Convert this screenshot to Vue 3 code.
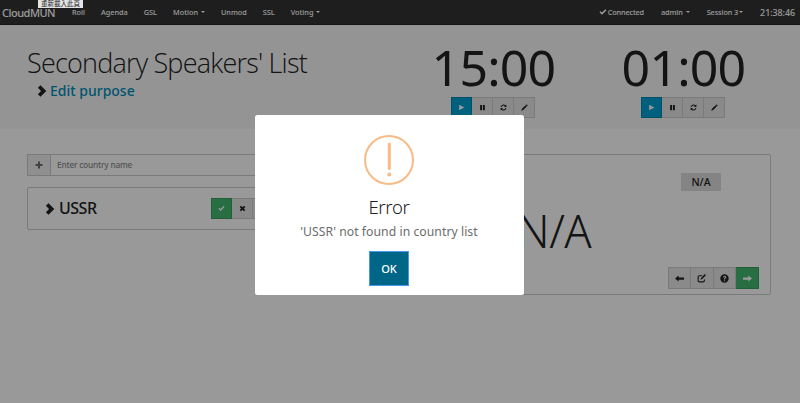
<script setup>
import { h } from 'vue'

const paths = {
  check: 'M1 8.700 3.200 6.300 6 9 12.600 2.300 15 4.700 6 13.700Z',
  times: 'M4.500 1.500 8 5 11.500 1.500 14.500 4.500 11 8 14.500 11.500 11.500 14.500 8 11 4.500 14.500 1.500 11.500 5 8 1.500 4.500Z',
  plus: 'M6 1h4v5h5v4h-5v5H6v-5H1V6h5Z',
  chevron: 'M2.500 3.800 6 .300 13.700 8 6 15.700 2.500 12.200 6.700 8Z',
  play: 'M2.500 1.500 14.500 8 2.500 14.500Z',
  pause: 'M2.500 2h4.500v12H2.500ZM9 2h4.500v12H9Z',
  refresh: 'M1.300 7A6.800 6.800 0 0 1 12.800 3.100L14.600 1.300V6.700H9.200L11.200 4.700A4.600 4.600 0 0 0 3.700 7ZM14.700 9A6.800 6.800 0 0 1 3.200 12.900L1.400 14.700V9.300H6.800L4.800 11.300A4.600 4.600 0 0 0 12.300 9Z',
  pencil: 'M12.600 .500 15.500 3.400 14 4.900 11.100 2ZM10.300 2.800 13.200 5.700 5 13.900 .500 15.500 2.100 11Z',
  left: 'M0 8 6.500 2.500V6H16V10H6.500V13.500Z',
  right: 'M16 8 9.500 2.500V6H0V10H9.500V13.500Z',
  edit: 'M10 2H4Q1 2 1 5V12Q1 15 4 15H11Q14 15 14 12V9L12 10.500V12Q12 13 11 13H4Q3 13 3 12V5Q3 4 4 4H8.500ZM14 0 16 2 9.200 9 6 10.200 7.200 7Z',
  question: 'M8 .500A7.500 7.500 0 1 0 8 15.500A7.500 7.500 0 1 0 8 .500ZM7 11H9.200V13H7ZM5 5.800Q5.300 3 8.100 3Q11.200 3 11.200 5.700Q11.200 7.400 9.200 8.300V9.800H7V7.500Q9 6.700 9 5.700Q9 4.900 8.100 4.900Q7.300 4.900 7.200 6Z',
}
const Icon = (props) =>
  h('svg', { viewBox: '0 0 16 16', class: 'icon' }, [
    h('path', { d: paths[props.name], fill: 'currentColor', 'fill-rule': 'evenodd' }),
  ])
Icon.props = ['name']

const links = [
  { label: 'Roll' },
  { label: 'Agenda' },
  { label: 'GSL' },
  { label: 'Motion', menu: true },
  { label: 'Unmod' },
  { label: 'SSL' },
  { label: 'Voting', menu: true },
]
const timers = ['15:00', '01:00']
const timerActions = ['play', 'pause', 'refresh', 'pencil']
const speakerActions = ['left', 'edit', 'question', 'right']
</script>

<template>
  <div class="page">
    <nav class="navbar">
      <span class="brand">CloudMUN</span>
      <div class="links">
        <span v-for="l in links" :key="l.label" class="link">{{ l.label }}<i v-if="l.menu" class="caret" /></span>
      </div>
      <div class="status">
        <span class="link connected"><Icon name="check" />Connected</span>
        <span class="link">admin<i class="caret" /></span>
        <span class="link">Session 3<i class="caret tight" /></span>
        <span class="clock">21:38:46</span>
      </div>
    </nav>

    <header class="header">
      <div class="heading">
        <h1>Secondary Speakers' List</h1>
        <div class="purpose"><Icon name="chevron" /><a>Edit purpose</a></div>
      </div>
      <div v-for="t in timers" :key="t" class="timer">
        <div class="time">{{ t }}</div>
        <div class="group">
          <span v-for="a in timerActions" :key="a" class="btn" :class="{ primary: a === 'play' }"><Icon :name="a" /></span>
        </div>
      </div>
    </header>

    <main class="content">
      <section class="queue">
        <div class="input">
          <span class="addon"><Icon name="plus" /></span>
          <span class="placeholder">Enter country name</span>
        </div>
        <div class="country">
          <Icon name="chevron" />
          <span class="name">USSR</span>
          <div class="group">
            <span class="btn success"><Icon name="check" /></span>
            <span class="btn"><Icon name="times" /></span>
            <span class="btn"><Icon name="left" /></span>
          </div>
        </div>
      </section>
      <section class="speaker">
        <div class="badge">N/A</div>
        <div class="current">N/A</div>
        <div class="group">
          <span v-for="a in speakerActions" :key="a" class="btn" :class="{ success: a === 'right' }"><Icon :name="a" /></span>
        </div>
      </section>
    </main>

    <div class="overlay">
      <div class="modal">
        <svg class="warning" viewBox="0 0 50 50">
          <circle cx="25" cy="25" r="24" />
          <path d="M25.300 9V33.500" />
          <circle class="dot" cx="25.300" cy="39.500" r="2" />
        </svg>
        <h2>Error</h2>
        <p>'USSR' not found in country list</p>
        <button>OK</button>
      </div>
    </div>
    <div class="hint">重新載入此頁</div>
  </div>
</template>

<style>
body { margin: 0; background: #fff; }
</style>

<style scoped>
* { box-sizing: border-box; }
.page {
  position: relative;
  height: 403px;
  overflow: hidden;
  background: #fff;
  color: #222;
  font-family: "Noto Sans", "Open Sans", sans-serif;
  white-space: nowrap;
}
.icon { display: block; flex: none; width: 8px; height: 8px; }
.navbar {
  display: flex;
  align-items: center;
  height: 25px;
  padding: 0 5px 0 2px;
  background: #333;
  border-bottom: 1px solid #222;
  color: #fff;
  font-size: 7.300px;
  font-weight: 500;
}
.brand { width: 70px; font-size: 11px; font-weight: 500; letter-spacing: -0.500px; }
.links { display: flex; gap: 16px; }
.link { display: flex; align-items: center; }
.caret {
  margin-left: 3px;
  border: 2px solid transparent;
  border-top-color: currentColor;
  border-bottom: 0;
}
.caret.tight { margin-left: 1px; }
.status { display: flex; align-items: center; margin-left: auto; }
.status .link { margin-right: 17px; letter-spacing: -0.100px; }
.status .connected { letter-spacing: -0.150px; }
.status .icon { width: 8px; height: 8px; margin-right: 1px; }
.clock { padding-top: 1px; font-size: 8.900px; letter-spacing: -0.050px; }
.header {
  display: flex;
  height: 104px;
  background: #f7f7f7;
}
.heading { width: 398.500px; padding: 20px 0 0 27px; }
h1 {
  margin: 0;
  font: 300 27px/36px "Open Sans", sans-serif;
  letter-spacing: -0.800px;
}
.purpose {
  display: flex;
  align-items: center;
  gap: 2px;
  padding-left: 9px;
  font-size: 14px;
  font-weight: 500;
  line-height: 18px;
}
.purpose .icon { width: 12px; height: 12px; }
.purpose a { padding-top: 1px; color: #008cba; }
.timer {
  display: flex;
  flex-direction: column;
  align-items: center;
  width: 190px;
  padding-top: 13px;
}
.time {
  padding-right: 0;
  font-size: 50px;
  line-height: 59px;
  letter-spacing: -0.800px;
}
.group { display: flex; }
.btn {
  display: flex;
  align-items: center;
  justify-content: center;
  width: 21px;
  height: 21px;
  background: #e7e7e7;
  border: 1px solid #ccc;
  border-left-width: 0;
}
.btn:first-child { border-left-width: 1px; }
.btn .icon { width: 7px; height: 7px; }
.timer .group { margin-right: 1px; }
.btn.primary { background: #00a0d0; border-color: #0085ad; color: #fff; }
.btn.success { background: #43b870; border-color: #3a9d5d; color: #fff; }
.content { display: flex; gap: 11px; padding: 25px 29px 0 27px; }
.queue { width: 302px; }
.input {
  display: flex;
  height: 22px;
  border: 1px solid #ccc;
  font-size: 8.300px;
}
.addon {
  display: flex;
  align-items: center;
  justify-content: center;
  width: 23px;
  background: #eee;
  border-right: 1px solid #ccc;
  color: #6f6f6f;
}
.placeholder { padding: 0 0 0 6px; color: #8c8c8c; font-weight: 500; line-height: 20px; letter-spacing: -0.200px; }
.country {
  display: flex;
  align-items: center;
  height: 43px;
  margin-top: 11px;
  padding: 0 0 0 16px;
  border: 1px solid #ccc;
  border-radius: 2px;
}
.country > .icon { width: 12px; height: 14px; margin-right: 3px; }
.name { width: 152px; padding-bottom: 1px; font-size: 16px; font-weight: 500; line-height: 22px; letter-spacing: -0.500px; }
.speaker {
  display: flex;
  flex: 1;
  flex-direction: column;
  align-items: flex-end;
  height: 141px;
  padding: 18px 11px 0 0;
  border: 1px solid #ccc;
  border-radius: 2px;
}
.badge {
  width: 40px;
  height: 18px;
  margin-right: 38px;
  background: #dcdcdc;
  font-size: 10.500px;
  font-weight: 500;
  line-height: 18px;
  text-align: center;
}
.current {
  width: 100%;
  height: 76px;
  padding-left: 8px;
  font-size: 45px;
  font-weight: 300;
  letter-spacing: -0.500px;
  line-height: 80px;
  text-align: center;
}
.speaker .btn { width: 22.750px; height: 22px; }
.speaker .btn .icon { width: 9px; height: 9px; }
.overlay {
  position: absolute;
  inset: 0;
  display: flex;
  align-items: flex-start;
  padding: 115px 0 0 254.500px;
  background: rgba(0, 0, 0, 0.4);
}
.modal {
  display: flex;
  flex-direction: column;
  align-items: center;
  width: 269px;
  height: 180px;
  padding-top: 20px;
  background: #fff;
  border-radius: 2.500px;
}
.warning { width: 50px; height: 50px; fill: none; stroke: #f8bb86; stroke-width: 2; }
.warning path { stroke-width: 3; stroke-linecap: round; }
.warning .dot { fill: #f8bb86; stroke: none; }
h2 { margin: 10px 0 0; font-size: 18.500px; font-weight: 300; line-height: 24px; letter-spacing: -0.300px; }
p { margin: 3px 0 0; color: #6c6c6c; font-size: 12.200px; line-height: 20px; letter-spacing: 0.050px; }
button {
  width: 40px;
  height: 35px;
  margin-top: 9px;
  padding: 0;
  background: #006687;
  border: 1px solid #4a98ed;
  color: #fff;
  font: 500 11px "Noto Sans", sans-serif;
}
.hint {
  position: absolute;
  top: 0;
  left: 38px;
  width: 45px;
  height: 8px;
  background: #e4e4e4;
  color: #222;
  font: 6.500px/6px "Noto Sans CJK TC", sans-serif;
  text-align: center;
}
</style>
